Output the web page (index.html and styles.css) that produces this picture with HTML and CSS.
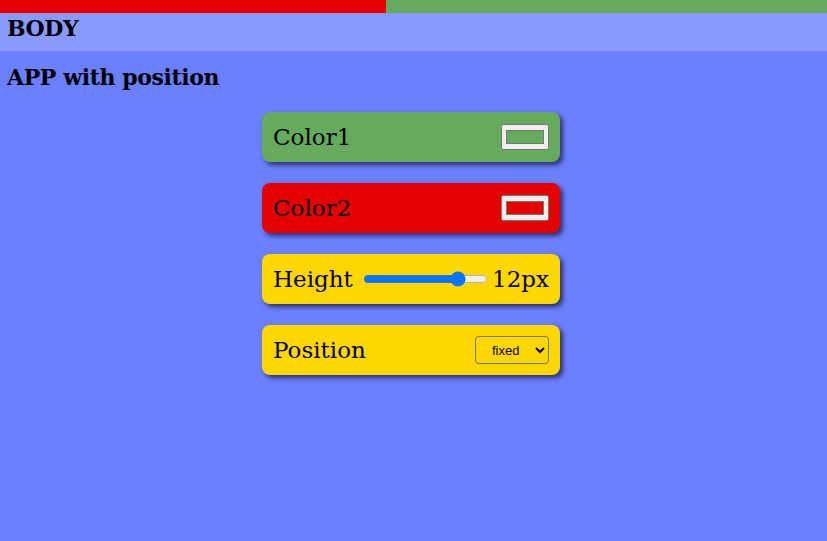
FILE: index.html
```html
<!DOCTYPE html>
<html>
<head>
<meta charset="utf-8">
<link rel="stylesheet" href="styles.css">
</head>
<body>
<div class="topbar"><div class="bar-red"></div><div class="bar-green"></div></div>
<div class="body-head">BODY</div>
<div class="app">
  <div class="app-title">APP with position</div>
  <div class="cards">
    <div class="card green"><span>Color1</span><input type="color" value="#66aa5e"></div>
    <div class="card red"><span>Color2</span><input type="color" value="#e60000"></div>
    <div class="card yellow"><span>Height</span><input type="range" min="0" max="15" value="12"><span>12px</span></div>
    <div class="card yellow"><span>Position</span><select><option>fixed</option><option>absolute</option><option>relative</option></select></div>
  </div>
</div>
</body>
</html>
```
FILE: styles.css
```css
html, body { margin: 0; padding: 0; }
body {
  background: #8899ff;
  font-family: "DejaVu Serif", "Liberation Serif", serif;
  color: #000;
  height: 541px;
  display: flex;
  flex-direction: column;
}
.topbar { display: flex; height: 13px; }
.bar-red { width: 386px; background: #e60000; }
.bar-green { flex: 1; background: #66aa5e; }
.body-head {
  height: 38px;
  padding: 0 7px;
  font-weight: bold;
  font-size: 22px;
  line-height: 30px;
  letter-spacing: -0.4px;
}
.app {
  flex: 1;
  background: #6b80ff;
  padding: 0 7px;
}
.app-title {
  font-weight: bold;
  font-size: 22px;
  line-height: 52px;
  letter-spacing: -0.4px;
  height: 61px;
}
.cards {
  display: flex;
  flex-direction: column;
  gap: 21px;
  width: 298px;
  margin-left: 255px;
}
.card {
  height: 50px;
  box-sizing: border-box;
  border-radius: 8px;
  box-shadow: 3px 3px 5px rgba(20, 20, 60, 0.75);
  display: flex;
  align-items: center;
  justify-content: space-between;
  padding: 0 11px;
  font-size: 23px;
}
.green { background: #66aa5e; }
.red { background: #e60000; }
.yellow { background: #ffd700; }
.card input[type="color"] {
  width: 48px;
  height: 26px;
  margin: 0;
}
.card input[type="range"] {
  width: 125px;
  margin: 0 4px 0 auto;
}
.card select {
  width: 74px;
  height: 28px;
  font-family: "Liberation Sans", Arial, sans-serif;
  font-size: 13px;
  background: #ffd700;
  border: 1px solid #767676;
  border-radius: 4px;
  padding-left: 12px;
}
```
